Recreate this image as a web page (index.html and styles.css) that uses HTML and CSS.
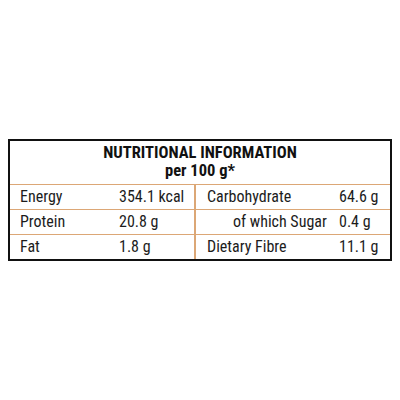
FILE: index.html
```html
<!DOCTYPE html>
<html lang="en">
<head>
  <meta charset="UTF-8">
  <meta name="viewport" content="width=device-width, initial-scale=1.0">
  <title>Nutritional Information</title>
  <link rel="stylesheet" href="styles.css">
</head>
<body>
  <!-- nutrition panel -->
  <div class="panel">
    <div class="panel-head">
      <h2>NUTRITIONAL INFORMATION</h2>
      <p>per 100 g*</p>
    </div>
    <div class="row">
      <div class="cell label">Energy</div>
      <div class="cell value half">354.1 kcal</div>
      <div class="cell label right">Carbohydrate</div>
      <div class="cell value">64.6 g</div>
    </div>
    <div class="row">
      <div class="cell label">Protein</div>
      <div class="cell value half">20.8 g</div>
      <div class="cell label sub">of which Sugar</div>
      <div class="cell value">0.4 g</div>
    </div>
    <div class="row">
      <div class="cell label">Fat</div>
      <div class="cell value half">1.8 g</div>
      <div class="cell label right">Dietary Fibre</div>
      <div class="cell value">11.1 g</div>
    </div>
  </div>
</body>
</html>
```

FILE: styles.css
```css
body {
  margin: 0;
  background-color: #fff;
  font-family: Roboto, "Liberation Sans", Arial, sans-serif;
  font-stretch: condensed;
  color: #1c1c1c;
}

.panel {
  width: 380px;
  margin: 139px 0 0 8px;
  border: 2px solid #111;
  background-color: #fff;
}

.panel-head {
  height: 43px;
  text-align: center;
  padding-top: 3px;
  box-sizing: border-box;
}

.panel-head h2,
.panel-head p {
  margin: 0;
  font-size: 16.5px;
  line-height: 18px;
  font-weight: bold;
  color: #111;
}

.row {
  display: grid;
  grid-template-columns: 108px 78px 142px 52px;
  height: 25px;
  border-top: 1px solid #dca776;
  box-sizing: border-box;
}

.cell {
  font-size: 16px;
  line-height: 24px;
  white-space: nowrap;
}

.label {
  padding-left: 10px;
}

.label.right {
  padding-left: 11px;
}

.label.sub {
  padding-left: 37px;
}

.half {
  border-right: 2px solid #dca776;
}

.value {
  padding-left: 1px;
}
```
